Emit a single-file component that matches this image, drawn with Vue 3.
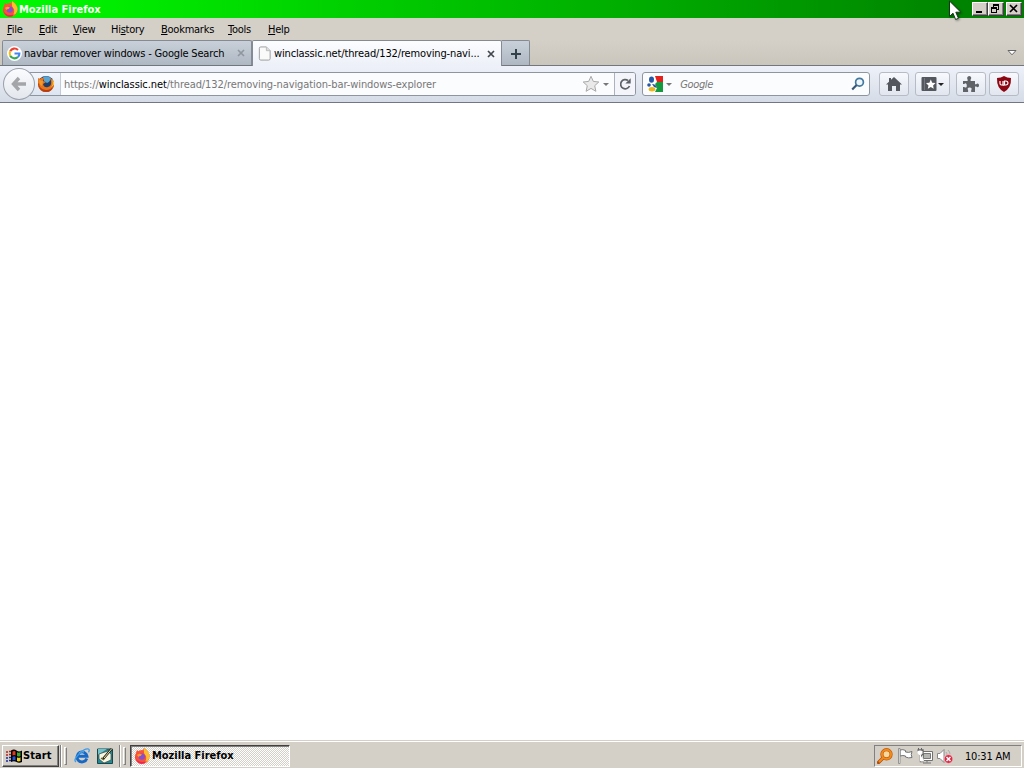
<template>
  <div class="screen">
    <header class="title-bar">
      <svg class="title-logo" viewBox="0 0 16 16">
        <use href="#firefox-new" />
      </svg>
      <h1>Mozilla Firefox</h1>
      <div class="window-buttons">
        <button class="win-btn" aria-label="Minimize">
          <svg viewBox="0 0 12 10"><path d="M2 7h6v2H2z" /></svg>
        </button>
        <button class="win-btn" aria-label="Restore">
          <svg viewBox="0 0 12 10" shape-rendering="crispEdges">
            <path d="M3 0h6v6H7V5h1V2H4v1H3zM1 3h6v6H1zM2 5v3h4V5z" fill-rule="evenodd" />
          </svg>
        </button>
        <button class="win-btn btn-close" aria-label="Close">
          <svg viewBox="0 0 12 10">
            <path d="M2 1l7 7M9 1L2 8" fill="none" stroke="#000" stroke-width="1.700" />
          </svg>
        </button>
      </div>
    </header>

    <nav class="menu-bar">
      <span v-for="item in menus" :key="item.key + item.rest" class="menu-item">
        {{ item.before }}<u>{{ item.key }}</u>{{ item.rest }}
      </span>
    </nav>

    <div class="tab-strip">
      <div class="tab">
        <svg class="favicon" viewBox="0 0 16 16">
          <circle cx="8" cy="8" r="8" fill="#fff" />
          <g fill="none" stroke-width="2.200">
            <path d="M11.700 4.200A5.200 5.200 0 0 0 3.400 5.600" stroke="#ea4335" />
            <path d="M3.400 5.600a5.200 5.200 0 0 0 0 4.800" stroke="#fbbc05" />
            <path d="M3.400 10.400a5.200 5.200 0 0 0 8.200 1.400" stroke="#34a853" />
            <path d="M11.600 11.800A5 5 0 0 0 13.200 8H8" stroke="#4285f4" />
          </g>
        </svg>
        <span class="tab-label tab-label-google">navbar remover windows - Google Search</span>
        <svg class="tab-close" viewBox="0 0 8 8"><path d="M1 1l6 6M7 1L1 7" /></svg>
      </div>
      <div class="tab tab-active">
        <svg class="favicon" viewBox="0 0 16 16">
          <path d="M2.500 2.500q0-1.500 1.500-1.500h6l4 4v8.500q0 1.500-1.500 1.500H4q-1.500 0-1.500-1.500z" fill="#fafafa" stroke="#999" />
          <path d="M10 1v4h4" fill="#ddd" stroke="#bbb" />
        </svg>
        <span class="tab-label tab-label-thread">winclassic.net/thread/132/removing-navi...</span>
        <svg class="tab-close" viewBox="0 0 8 8"><path d="M1 1l6 6M7 1L1 7" /></svg>
      </div>
      <div class="tab-new">
        <svg viewBox="0 0 12 12"><path d="M6 1v10M1 6h10" stroke="#34424c" stroke-width="2" /></svg>
      </div>
      <svg class="tab-list" viewBox="0 0 10 6">
        <path d="M1 .5h8L5 4.800z" fill="#fff" stroke="#666" />
      </svg>
    </div>

    <div class="nav-bar">
      <button class="btn-back" aria-label="Back">
        <svg viewBox="0 0 16 16">
          <path d="M8 2L2.500 8 8 14M3 8h12" fill="none" stroke="#a3a5a8" stroke-width="3.400" />
        </svg>
      </button>
      <div class="url-bar">
        <div class="identity">
          <svg viewBox="0 0 18 18">
            <circle cx="9" cy="9" r="8" fill="#1d3f6e" />
            <path d="M6 2q4-2 8 1-1 4-4 5L7 6z" fill="#5ba6d0" />
            <path d="M1 3l2 1q2-2 4-1L6 6l3 1-3 2q1 4 5 3 4-1 3-6l-1-3q4 2 4 7-1 7-8 7-8-1-8-8z" fill="#e9761b" />
            <path d="M2 8q0 6 7 7 5 0 7-4-1 6-7 6T1 9z" fill="#b93c12" />
            <path d="M15 4q2 5-1 8 4-2 3-5z" fill="#ffc83a" />
            <path d="M2 5l4 1-1 5q-3-1-3-6z" fill="#f29a2a" />
          </svg>
        </div>
        <span class="url-text">https://<b>winclassic.net</b>/thread/132/removing-navigation-bar-windows-explorer</span>
        <svg class="star" viewBox="0 0 18 18">
          <path d="M9 1.300l2.300 5.100 5.500.6-4.100 3.700 1.200 5.600L9 13.400l-4.900 2.900 1.200-5.600L1.200 7l5.500-.6z" fill="#e9e9e9" stroke="#a8a8a8" />
        </svg>
        <i class="arrow arrow-url"></i>
        <div class="reload">
          <svg viewBox="0 0 14 14">
            <path d="M11.500 9A4.600 4.600 0 1 1 10 3.500" fill="none" stroke="#5d6268" stroke-width="1.700" />
            <path d="M12.700 1.200v5.300H7.400z" fill="#5d6268" />
          </svg>
        </div>
      </div>

      <div class="search-bar">
        <svg class="engine" viewBox="0 0 16 16">
          <path d="M8 0h8v16H8z" fill="#169a3e" />
          <path d="M8 0h8v6H9z" fill="#e3221d" />
          <path d="M0 0h8l2 6-2 2 2 4-2 4H0z" fill="#fff" />
          <ellipse cx="4.500" cy="3.600" rx="2.500" ry="3.200" fill="#2559a8" />
          <circle cx="2" cy="9" r="1.800" fill="#2559a8" />
          <path d="M5 8q4 0 5 4l-3-1z" fill="#2559a8" />
          <ellipse cx="5" cy="13.300" rx="3.300" ry="2.200" fill="#edb619" />
        </svg>
        <i class="arrow"></i>
        <span class="search-hint">Google</span>
        <svg class="magnifier" viewBox="0 0 14 14">
          <circle cx="8.500" cy="5.200" r="3.900" fill="#eff6fb" stroke="#43799f" stroke-width="1.700" />
          <path d="M5.600 8L1.200 12.500" stroke="#3a5876" stroke-width="2.200" />
        </svg>
      </div>

      <button class="tool-btn btn-home" aria-label="Home">
        <svg viewBox="0 0 16 16" fill="#54585e">
          <path d="M8 1l8 7.500h-2V15h-4v-5H6v5H2V8.500H0L3 5.700V2h2v1.800z" />
        </svg>
      </button>
      <button class="tool-btn btn-bookmarks" aria-label="Bookmarks">
        <svg viewBox="0 0 16 16">
          <rect x=".5" y="1" width="15" height="14" rx="1" fill="#54585e" />
          <path d="M3.500 2v12" stroke="#74787e" />
          <path d="M9.800 3.600l1.400 3.100 3.300.4-2.400 2.300.6 3.400-2.900-1.700-3 1.700.7-3.400-2.500-2.300 3.400-.4z" fill="#fff" />
        </svg>
        <i class="arrow arrow-dark"></i>
      </button>
      <button class="tool-btn btn-addons" aria-label="Add-ons">
        <svg viewBox="0 0 16 16" fill="#606469">
          <path d="M0 5h4.600V3.500Q4 2.600 4.200 1.500 4.700 0 6.200 0q1.700 0 2 1.500.2 1-.6 2V5H12v3.200h1.200q1-.9 2-.5.800.4.800 1.700t-.8 1.700q-1 .3-2-.6H12V16H8.200v-2q.8-.9.300-1.800-.7-.9-2-.8-1.300 0-1.800.9-.3.900.4 1.700v2H0v-5h1.300q.8.800 1.700.5.800-.4.800-1.600Q3.800 7.800 3 7.400 2 7 1.300 8H0z" />
        </svg>
      </button>
      <button class="tool-btn btn-shield" aria-label="uBlock Origin">
        <svg viewBox="0 0 16 16">
          <path d="M8 0q3 2 7 2 .5 10-7 14Q.5 12 1 2q4 0 7-2z" fill="#8d0713" />
          <path d="M4 5v2.500Q4 9 5.500 9H7q0 .5 1.500 0H10q2-.2 2-2T10 5H8.500v4M7 5v4" fill="none" stroke="#fff" stroke-width="1.200" />
        </svg>
      </button>
    </div>

    <main class="page"></main>

    <footer class="taskbar">
      <button class="btn-start">
        <svg viewBox="0 0 16 14">
          <path d="M5 1.500q3-2 5.500 0t5.500 0V13q-3 1.500-5.500 0T5 13z" fill="#000" />
          <path d="M6.500 2.500q2-1 3 0v4q-1-1-3 0z" fill="#e5381e" />
          <path d="M11 3.300q1.500.8 3.500 0V7q-2 1-3.500 0z" fill="#3fa52f" />
          <path d="M6.500 7.700q2-1 3 0v3.800q-1-1-3 0z" fill="#2853d2" />
          <path d="M11 8.200q1.500 1 3.500 0V12q-2 .8-3.500 0z" fill="#f0cf26" />
          <path d="M0 3h2M3 2.500h2M0 6h2M3 5.500h2" stroke="#b02620" stroke-width="1.600" />
          <path d="M0 9h2M3 8.500h2M0 12h2M3 11.500h2" stroke="#1d2b98" stroke-width="1.600" />
        </svg>
        <span>Start</span>
      </button>
      <i class="divider"></i>
      <i class="grip"></i>
      <svg class="quick quick-ie" viewBox="0 0 16 16">
        <path d="M12.800 10.500A5 5 0 1 1 13 8.200H4.500" fill="none" stroke="#1769c5" stroke-width="2.900" />
        <path d="M5 5.500Q7 3 10 4" fill="none" stroke="#69bdf5" stroke-width="1.300" />
        <path d="M2 14Q-1 12 5 6T14.500 1q1.500.8 0 3.300" fill="none" stroke="#3c9ae8" stroke-width="1.300" />
      </svg>
      <svg class="quick" viewBox="0 0 16 16">
        <path d="M.5 1h15v14.500H.5z" fill="#218b95" stroke="#17474f" />
        <path d="M1 1h9L1 7z" fill="#72c4cb" />
        <path d="M2 6l9-3 3 3v6l-7 3-5-4z" fill="#f8f7df" stroke="#444" stroke-width=".7" />
        <path d="M6 11L14.500 1" stroke="#20251d" stroke-width="2.500" />
        <path d="M7 10l7.500-9" stroke="#f0dfa0" />
        <path d="M4 10l3 2" stroke="#665f28" stroke-width="1.500" />
      </svg>
      <i class="divider divider-task"></i>
      <i class="grip"></i>
      <div class="task">
        <svg viewBox="0 0 16 16"><use href="#firefox-new" /></svg>
        <span>Mozilla Firefox</span>
      </div>
      <div class="tray">
        <svg viewBox="0 0 16 16">
          <path d="M6 10L1.500 14.500" stroke="#b44d08" stroke-width="3.400" stroke-linecap="round" />
          <circle cx="9.500" cy="6.300" r="4.600" fill="#f7d8a0" stroke="#c25c09" stroke-width="3.200" />
          <circle cx="9.500" cy="6.300" r="4.600" fill="none" stroke="#f28b1c" stroke-width="1.900" />
          <path d="M6 10l-4 4" stroke="#f28b1c" stroke-width="1.900" />
        </svg>
        <svg viewBox="0 0 16 16">
          <path d="M3 2q3-1 5.500.5V4q3 1 6.500-.5-1.500 3 0 6-3.500 1-6.500-.5V8Q6 7 3 8z" fill="#fff" stroke="#727272" />
          <path d="M1.500.5h1.500v15H1.500z" fill="#fff" stroke="#808080" stroke-width=".8" />
        </svg>
        <svg viewBox="0 0 16 16">
          <path d="M4.500 3.500h11v9h-11z" fill="#fff" stroke="#707070" />
          <path d="M6.500 5.500h7v5h-7z" fill="#b5b5b2" stroke="#777" />
          <path d="M10 13v1.500M6 15h8" stroke="#707070" />
          <path d="M.5 2.500h5V6L4 7v6h3" fill="none" stroke="#666" stroke-width="2.400" />
          <path d="M1 3h4v2.500L3.500 7 1 5.500zM3.500 7v6H7" fill="#fff" stroke="#fff" />
          <path d="M1.500 0v2.500M4.500 0v2.500" stroke="#666" />
        </svg>
        <svg viewBox="0 0 16 16">
          <path d="M.5 5.500H3L7 1.500v13l-4-4H.5z" fill="#fff" stroke="#888" />
          <path d="M9 4q1 1.500 1 3M11 2q2 2 2 4" fill="none" stroke="#aaa" />
          <circle cx="11.500" cy="11" r="4.400" fill="#d92b46" stroke="#f7d0d2" stroke-width=".7" />
          <path d="M9.500 9l4 4M13.500 9l-4 4" stroke="#fff" stroke-width="1.500" />
        </svg>
        <time>10:31 AM</time>
      </div>
    </footer>

    <svg class="cursor" viewBox="0 0 13 21">
      <path d="M.5 1v15.500l3.500-3.300 2.600 6.300 2.900-1.200-2.700-6.100h5z" fill="#fff" stroke="#17351a" />
    </svg>

    <!-- shared symbols -->
    <svg class="symbols" width="0" height="0">
      <symbol id="firefox-new" viewBox="0 0 16 16">
        <circle cx="8" cy="9" r="7" fill="#fb5634" />
        <path d="M2 5L3 2l2 2h3L10 0q6 4 5.500 9-1 6.500-7.500 6.500Q2 15 1 9z" fill="#f95138" />
        <path d="M10 0q6 4 5.500 9-1 5-5.500 6 3-3 2-7Q9 5 10 0z" fill="#ffbf2d" />
        <path d="M1 8q1 6 8 6 4 0 5-3-2 5-7 4.800Q2 15 1 8z" fill="#e8265b" />
        <circle cx="7.800" cy="8.600" r="3.200" fill="#8350cf" />
        <path d="M3 7q2-2 5-.5L6.500 8Q5 8 4.500 9z" fill="#ff9b2b" />
      </symbol>
    </svg>
  </div>
</template>

<script setup>
const menus = [
  { before: '', key: 'F', rest: 'ile' },
  { before: '', key: 'E', rest: 'dit' },
  { before: '', key: 'V', rest: 'iew' },
  { before: 'Hi', key: 's', rest: 'tory' },
  { before: '', key: 'B', rest: 'ookmarks' },
  { before: '', key: 'T', rest: 'ools' },
  { before: '', key: 'H', rest: 'elp' },
];
</script>

<style>
body {
  margin: 0;
  overflow: hidden;
}
</style>

<style scoped>
* {
  box-sizing: border-box;
}

.screen {
  position: relative;
  display: flex;
  flex-direction: column;
  width: 1024px;
  height: 768px;
  overflow: hidden;
  background: #d4d0c8;
  color: #000;
  font-family: 'DejaVu Sans Condensed', 'DejaVu Sans', sans-serif;
  font-size: 11px;
  line-height: 14px;
  white-space: nowrap;
}

svg {
  display: block;
  flex: none;
}

button {
  padding: 0;
  font: inherit;
  color: inherit;
}

.title-bar {
  display: flex;
  align-items: center;
  height: 18px;
  padding: 0 2px;
  background: linear-gradient(to right, #00fa00, #007c00);
}

.title-logo {
  width: 16px;
  height: 16px;
}

.title-bar h1 {
  margin: 0 0 0 1px;
  padding-top: 1px;
  color: #fff;
  font-size: 11px;
  font-weight: bold;
  letter-spacing: -0.02px;
}

.window-buttons {
  display: flex;
  margin-left: auto;
}

.win-btn {
  display: flex;
  width: 16px;
  height: 14px;
  border: 1px solid;
  border-color: #fff #404040 #404040 #fff;
  background: #d4d0c8;
  box-shadow: inset -1px -1px #808080;
}

.win-btn svg {
  width: 12px;
  height: 10px;
  margin: 1px;
}

.btn-close {
  margin-left: 2px;
}

.menu-bar {
  display: grid;
  grid-template-columns: 32px 34px 38px 50px 67px 40px 40px;
  align-items: center;
  height: 22px;
  padding: 2px 0 0 7px;
}

.menu-item {
  letter-spacing: -0.25px;
}

.menu-item u {
  text-underline-offset: 1px;
}

.tab-strip {
  display: flex;
  height: 26px;
  padding-left: 2px;
  border-bottom: 1px solid #72777e;
  background: linear-gradient(#d4d0c8, #cbc6bc);
}

.tab {
  display: flex;
  align-items: center;
  width: 250px;
  height: 25px;
  padding: 0 6px 0 4px;
  border: 1px solid #858b94;
  border-bottom: 0;
  border-radius: 2px 2px 0 0;
  background: linear-gradient(#c9d0d9, #aeb8c3);
}

.tab-active {
  height: 26px;
  margin-bottom: -1px;
  background: linear-gradient(#fcfdff, #edf0f8);
}

.favicon {
  width: 15px;
  height: 15px;
}

.tab-label {
  flex: 1;
  margin-left: 2px;
}

.tab-label-google {
  padding-top: 1px;
  letter-spacing: -0.18px;
}

.tab-label-thread {
  letter-spacing: -0.14px;
}

.tab-close {
  width: 8px;
  height: 8px;
  fill: none;
  stroke: #8f969e;
  stroke-width: 1.700;
}

.tab-active .tab-close {
  stroke: #43474d;
}

.tab-new {
  display: flex;
  align-items: center;
  justify-content: center;
  width: 28px;
  height: 25px;
  border: 1px solid #858b94;
  border-width: 1px 1px 0 0;
  border-radius: 0 2px 0 0;
  background: linear-gradient(#c9d0d9, #aeb8c3);
}

.tab-new svg {
  width: 12px;
  height: 12px;
  margin-top: 2px;
}

.tab-list {
  align-self: center;
  width: 10px;
  height: 6px;
  margin: 0 7px 0 auto;
}

.nav-bar {
  display: flex;
  align-items: center;
  height: 37px;
  padding: 0 5px 0 3px;
  border-bottom: 1px solid #6f7784;
  background: linear-gradient(#eef1f9, #d5dce7);
}

.btn-back {
  position: relative;
  z-index: 1;
  display: flex;
  align-items: center;
  justify-content: center;
  width: 32px;
  height: 32px;
  border: 1px solid #9ba1aa;
  border-radius: 50%;
  background: linear-gradient(#fbfcfe, #e3e7ed);
}

.btn-back svg {
  width: 16px;
  height: 16px;
}

.url-bar {
  display: flex;
  align-items: center;
  width: 609px;
  height: 24px;
  margin-left: -7px;
  border: 1px solid #8e959f;
  border-radius: 0 3px 3px 0;
  background: #fbfcfe;
  overflow: hidden;
}

.identity {
  display: flex;
  align-items: center;
  width: 32px;
  height: 22px;
  padding-left: 8px;
  border-right: 1px solid #c3cad6;
  background: linear-gradient(#f3f6fc, #dce5f2);
}

.identity svg {
  width: 18px;
  height: 18px;
}

.url-text {
  flex: 1;
  padding: 2px 0 0 3px;
  color: #777;
  letter-spacing: -0.09px;
}

.url-text b {
  color: #000;
  font-weight: normal;
}

.star {
  width: 18px;
  height: 18px;
}

.arrow {
  flex: none;
  width: 0;
  height: 0;
  border: 3px solid transparent;
  border-top-color: #777;
  border-bottom: 0;
}

.arrow-url {
  margin: 0 5px 0 3px;
}

.arrow-dark {
  margin-left: 1px;
  border-top-color: #222;
}

.reload {
  display: flex;
  align-items: center;
  justify-content: center;
  width: 21px;
  height: 22px;
  border-left: 1px solid #adb3bc;
  background: #f3f5fa;
}

.reload svg {
  width: 14px;
  height: 14px;
}

.search-bar {
  display: flex;
  align-items: center;
  width: 228px;
  height: 24px;
  margin-left: 6px;
  padding: 0 4px;
  border: 1px solid #8e959f;
  border-radius: 3px;
  background: #fbfcfe;
}

.engine {
  width: 16px;
  height: 16px;
  margin-right: 3px;
}

.search-hint {
  flex: 1;
  padding: 2px 0 0 8px;
  color: #777;
  font-style: italic;
  letter-spacing: -0.4px;
}

.magnifier {
  width: 14px;
  height: 14px;
}

.tool-btn {
  display: flex;
  align-items: center;
  justify-content: center;
  width: 30px;
  height: 24px;
  border: 1px solid #b6bbc5;
  border-radius: 3px;
  background: linear-gradient(#f7f9fd, #e1e6ef);
}

.tool-btn svg {
  width: 16px;
  height: 16px;
}

.btn-home {
  margin-left: 9px;
}

.btn-bookmarks {
  width: 35px;
  margin-left: 6px;
}

.btn-addons {
  margin-left: 6px;
}

.btn-shield {
  margin-left: 3px;
}

.page {
  flex: 1;
  background: #fff;
}

.taskbar {
  display: flex;
  align-items: center;
  height: 28px;
  padding: 2px 2px 0;
  border-top: 1px solid #d4d0c8;
  box-shadow: inset 0 1px #fff;
}

.btn-start {
  display: flex;
  align-items: center;
  width: 57px;
  height: 22px;
  padding-left: 3px;
  border: 1px solid;
  border-color: #fff #404040 #404040 #fff;
  background: #d4d0c8;
  box-shadow: inset -1px -1px #808080;
  font-weight: bold;
  letter-spacing: 0.1px;
}

.btn-start svg {
  width: 16px;
  height: 14px;
  margin-right: 1px;
}

.divider {
  width: 2px;
  height: 22px;
  margin-left: 1px;
  border-left: 1px solid #808080;
  border-right: 1px solid #fff;
}

.divider-task {
  margin-left: 6px;
}

.grip {
  width: 3px;
  height: 18px;
  margin-left: 2px;
  border: 1px solid;
  border-color: #fff #808080 #808080 #fff;
}

.quick {
  width: 16px;
  height: 16px;
  margin-left: 7px;
}

.quick-ie {
  margin-left: 7px;
}

.task {
  display: flex;
  align-items: center;
  width: 160px;
  height: 22px;
  margin-left: 4px;
  padding: 1px 0 0 3px;
  border: 1px solid;
  border-color: #404040 #fff #fff #404040;
  background: repeating-conic-gradient(#fff 0 25%, #d4d0c8 0 50%) 0 0 / 2px 2px;
  box-shadow: inset 1px 1px #808080;
  font-weight: bold;
  letter-spacing: -0.02px;
}

.task svg {
  width: 16px;
  height: 16px;
  margin-right: 2px;
}

.tray {
  display: flex;
  align-items: center;
  width: 148px;
  height: 22px;
  margin-left: auto;
  padding-left: 2px;
  border: 1px solid;
  border-color: #808080 #fff #fff #808080;
}

.tray svg {
  width: 16px;
  height: 16px;
  margin-right: 4px;
}

.tray time {
  margin-left: 8px;
  padding-top: 2px;
  letter-spacing: -0.2px;
}

.cursor {
  position: absolute;
  top: 0;
  left: 949px;
  width: 13px;
  height: 21px;
  filter: drop-shadow(1px 1px 1px rgba(0, 0, 0, 0.4));
}

.symbols {
  position: absolute;
}
</style>
